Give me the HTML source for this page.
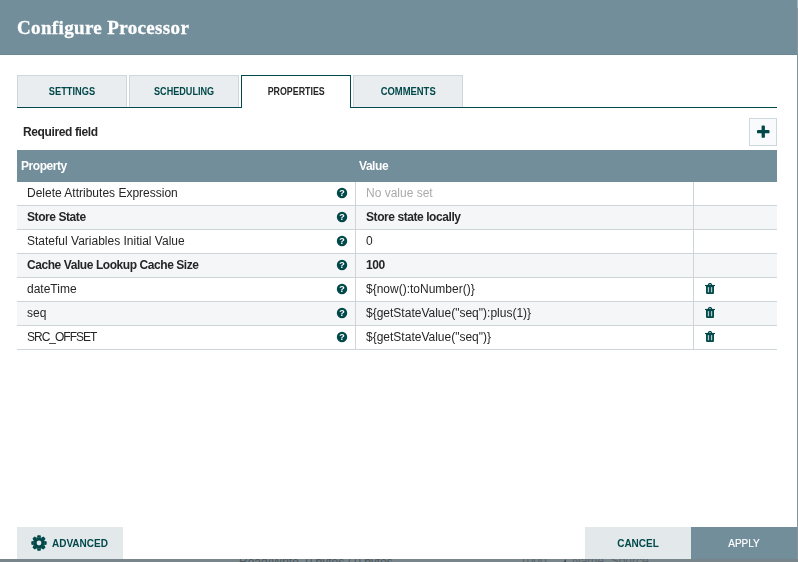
<!DOCTYPE html>
<html><head><meta charset="utf-8">
<style>
*{box-sizing:border-box;margin:0;padding:0}
html,body{width:798px;height:562px;overflow:hidden;background:#87949a;font-family:"Liberation Sans",sans-serif}
.abs{position:absolute}
#dlg{position:absolute;left:0;top:0;width:797px;height:559px;background:#fff;will-change:transform}
#hdr{position:absolute;left:0;top:0;width:797px;height:55px;background:#728e9b;border-bottom:1px solid #6a8793}
#title{position:absolute;left:17px;top:17px;font-family:"Liberation Serif",serif;font-weight:bold;font-size:19px;letter-spacing:0.35px;color:#fff;-webkit-text-stroke:0.3px #fff;line-height:22px;white-space:nowrap}
.tab{position:absolute;top:75px;height:32px;width:110px;background:#e9edef;border:1px solid #ccd8db;border-bottom:none;color:#004849;font-size:10px;font-weight:bold;text-align:center;line-height:32px}
.tab.sel{background:#fff;border:1px solid #004849;border-bottom:none;height:33px;color:#262626;z-index:2}
#tabline{position:absolute;left:17px;top:107px;width:760px;height:1px;background:#004849}
#req{position:absolute;left:23px;top:125px;font-size:12px;font-weight:bold;color:#262626;line-height:14px;letter-spacing:-0.38px}
#add{position:absolute;left:749px;top:118px;width:28px;height:28px;border:1px solid #ccd8db;background:#f8fafb}
#thead{position:absolute;left:17px;top:150px;width:760px;height:32px;background:#728e9b}
.th{position:absolute;top:159px;font-size:12px;font-weight:bold;color:#fff;line-height:14px;letter-spacing:-0.45px}
.row{position:absolute;left:17px;width:760px;height:24px;border-bottom:1px solid #cbd5da;background:#fff}
.row.alt{background:#f4f6f7}
.cell{position:absolute;font-size:12px;color:#262626;line-height:14px;white-space:nowrap}
.b{font-weight:bold;letter-spacing:-0.43px}
.vline{position:absolute;top:182px;height:167px;width:1px;background:#cbd5da}
.help{position:absolute;left:336px;width:12px;height:12px;margin-top:-0.5px}
.trash{position:absolute;left:704px;width:12px;height:12px}
.btn{position:absolute;top:527px;height:32px;width:106px;background:#e3e8eb;color:#004849;font-size:10px;font-weight:bold;text-align:center;line-height:34px}
</style></head>
<body>
<div id="strip" style="position:absolute;left:0;top:559px;width:798px;height:3px;overflow:hidden;background:#78858b">
  <div style="position:absolute;left:239px;top:-4px;font-size:12px;line-height:14px;color:#4d575c;white-space:nowrap">Read/Write &nbsp;0 bytes / 0 bytes</div>
  <div style="position:absolute;left:520px;top:-5px;font-size:12px;line-height:14px;color:#5a6469;white-space:nowrap">1000</div>
  <div style="position:absolute;left:560px;top:0;width:0;height:0;border-left:6px solid transparent;border-bottom:7px solid #3f484d"></div>
  <div style="position:absolute;left:572px;top:-5px;font-size:12px;line-height:14px;color:#5a6469;white-space:nowrap">Name &nbsp;Source</div>
</div>
<div style="position:absolute;left:797px;top:0;width:1px;height:8px;background:#a3b5bd"></div>
<div id="dlg">
  <div id="hdr"></div>
  <div id="title">Configure Processor</div>

  <div class="tab" style="left:17px"><span style="display:inline-block;transform:scaleX(0.926)">SETTINGS</span></div>
  <div class="tab" style="left:129px"><span style="display:inline-block;transform:scaleX(0.908)">SCHEDULING</span></div>
  <div id="tabline"></div>
  <div class="tab sel" style="left:241px"><span style="display:inline-block;transform:scaleX(0.886)">PROPERTIES</span></div>
  <div class="tab" style="left:353px"><span style="display:inline-block;transform:scaleX(0.943)">COMMENTS</span></div>

  <div id="req">Required field</div>
  <div id="add">
    <svg width="28" height="28" style="position:absolute;left:-1px;top:-1px" viewBox="0 0 28 28">
      <rect x="8" y="12.1" width="12.5" height="3.2" rx="0.9" fill="#004849"/><rect x="12.6" y="7.5" width="3.3" height="12.3" rx="0.9" fill="#004849"/>
    </svg>
  </div>

  <div id="thead"></div>
  <div class="th" style="left:21px">Property</div>
  <div class="th" style="left:359px">Value</div>

  <div class="row" style="top:182px"></div>
  <div class="row alt" style="top:206px"></div>
  <div class="row" style="top:230px"></div>
  <div class="row alt" style="top:254px"></div>
  <div class="row" style="top:278px"></div>
  <div class="row alt" style="top:302px"></div>
  <div class="row" style="top:326px"></div>
  <div class="vline" style="left:355px"></div>
  <div class="vline" style="left:693px"></div>

  <div class="cell" style="left:27px;top:186px">Delete Attributes Expression</div>
  <div class="cell b" style="left:27px;top:210px">Store State</div>
  <div class="cell" style="left:27px;top:234px">Stateful Variables Initial Value</div>
  <div class="cell b" style="left:27px;top:258px">Cache Value Lookup Cache Size</div>
  <div class="cell" style="left:27px;top:282px">dateTime</div>
  <div class="cell" style="left:27px;top:306px">seq</div>
  <div class="cell" style="left:27px;top:330px;letter-spacing:-1px">SRC_OFFSET</div>

  <div class="cell" style="left:366px;top:186px;color:#aaaaaa">No value set</div>
  <div class="cell b" style="left:366px;top:210px">Store state locally</div>
  <div class="cell" style="left:366px;top:234px">0</div>
  <div class="cell b" style="left:366px;top:258px">100</div>
  <div class="cell" style="left:366px;top:282px">${now():toNumber()}</div>
  <div class="cell" style="left:366px;top:306px">${getStateValue("seq"):plus(1)}</div>
  <div class="cell" style="left:366px;top:330px">${getStateValue("seq")}</div>

  <!-- help icons -->
  <svg class="help" style="top:187px" viewBox="0 0 12 12"><circle cx="6" cy="6" r="5.2" fill="#004849"/><text x="6" y="9.2" font-size="9" font-weight="bold" fill="#fff" text-anchor="middle" font-family="Liberation Sans">?</text></svg>
  <svg class="help" style="top:211px" viewBox="0 0 12 12"><circle cx="6" cy="6" r="5.2" fill="#004849"/><text x="6" y="9.2" font-size="9" font-weight="bold" fill="#fff" text-anchor="middle" font-family="Liberation Sans">?</text></svg>
  <svg class="help" style="top:235px" viewBox="0 0 12 12"><circle cx="6" cy="6" r="5.2" fill="#004849"/><text x="6" y="9.2" font-size="9" font-weight="bold" fill="#fff" text-anchor="middle" font-family="Liberation Sans">?</text></svg>
  <svg class="help" style="top:259px" viewBox="0 0 12 12"><circle cx="6" cy="6" r="5.2" fill="#004849"/><text x="6" y="9.2" font-size="9" font-weight="bold" fill="#fff" text-anchor="middle" font-family="Liberation Sans">?</text></svg>
  <svg class="help" style="top:283px" viewBox="0 0 12 12"><circle cx="6" cy="6" r="5.2" fill="#004849"/><text x="6" y="9.2" font-size="9" font-weight="bold" fill="#fff" text-anchor="middle" font-family="Liberation Sans">?</text></svg>
  <svg class="help" style="top:307px" viewBox="0 0 12 12"><circle cx="6" cy="6" r="5.2" fill="#004849"/><text x="6" y="9.2" font-size="9" font-weight="bold" fill="#fff" text-anchor="middle" font-family="Liberation Sans">?</text></svg>
  <svg class="help" style="top:331px" viewBox="0 0 12 12"><circle cx="6" cy="6" r="5.2" fill="#004849"/><text x="6" y="9.2" font-size="9" font-weight="bold" fill="#fff" text-anchor="middle" font-family="Liberation Sans">?</text></svg>

  <!-- trash icons -->
  <svg class="trash" style="top:283px" viewBox="0 0 12 12"><path d="M4.4 2.6V2.1Q4.4 0.6 6 0.6Q7.6 0.6 7.6 2.1V2.6" stroke="#004849" stroke-width="1.3" fill="none"/><path d="M1 2.5H11" stroke="#004849" stroke-width="1.1" fill="none"/><path d="M2 2.8H10V9.8Q10 11 8.8 11H3.2Q2 11 2 9.8Z" fill="#004849"/><rect x="3.8" y="4.1" width="1.3" height="5.2" fill="#b4c6c7"/><rect x="6.9" y="4.1" width="1.3" height="5.2" fill="#b4c6c7"/></svg>
  <svg class="trash" style="top:307px" viewBox="0 0 12 12"><path d="M4.4 2.6V2.1Q4.4 0.6 6 0.6Q7.6 0.6 7.6 2.1V2.6" stroke="#004849" stroke-width="1.3" fill="none"/><path d="M1 2.5H11" stroke="#004849" stroke-width="1.1" fill="none"/><path d="M2 2.8H10V9.8Q10 11 8.8 11H3.2Q2 11 2 9.8Z" fill="#004849"/><rect x="3.8" y="4.1" width="1.3" height="5.2" fill="#b4c6c7"/><rect x="6.9" y="4.1" width="1.3" height="5.2" fill="#b4c6c7"/></svg>
  <svg class="trash" style="top:331px" viewBox="0 0 12 12"><path d="M4.4 2.6V2.1Q4.4 0.6 6 0.6Q7.6 0.6 7.6 2.1V2.6" stroke="#004849" stroke-width="1.3" fill="none"/><path d="M1 2.5H11" stroke="#004849" stroke-width="1.1" fill="none"/><path d="M2 2.8H10V9.8Q10 11 8.8 11H3.2Q2 11 2 9.8Z" fill="#004849"/><rect x="3.8" y="4.1" width="1.3" height="5.2" fill="#b4c6c7"/><rect x="6.9" y="4.1" width="1.3" height="5.2" fill="#b4c6c7"/></svg>

  <div class="btn" style="left:17px;text-align:left;padding-left:35px">ADVANCED</div>
  <svg class="abs" style="left:31px;top:534.5px" width="16" height="16" viewBox="0 0 16 16"><g fill="#004849"><circle cx="8" cy="8" r="5.6"/><path d="M5.80 2.80 L6.50 0.30 L9.50 0.30 L10.20 2.80 Z M10.12 2.77 L12.38 1.49 L14.51 3.62 L13.23 5.88 Z M13.20 5.80 L15.70 6.50 L15.70 9.50 L13.20 10.20 Z M13.23 10.12 L14.51 12.38 L12.38 14.51 L10.12 13.23 Z M10.20 13.20 L9.50 15.70 L6.50 15.70 L5.80 13.20 Z M5.88 13.23 L3.62 14.51 L1.49 12.38 L2.77 10.12 Z M2.80 10.20 L0.30 9.50 L0.30 6.50 L2.80 5.80 Z M2.77 5.88 L1.49 3.62 L3.62 1.49 L5.88 2.77 Z"/></g><circle cx="8" cy="8" r="2.4" fill="#e3e8eb"/></svg>
  <div class="btn" style="left:585px">CANCEL</div>
  <div class="btn" style="left:691px;background:#728e9b;color:#fff;font-weight:normal;-webkit-text-stroke:0.15px #fff">APPLY</div>
</div>
</body></html>
